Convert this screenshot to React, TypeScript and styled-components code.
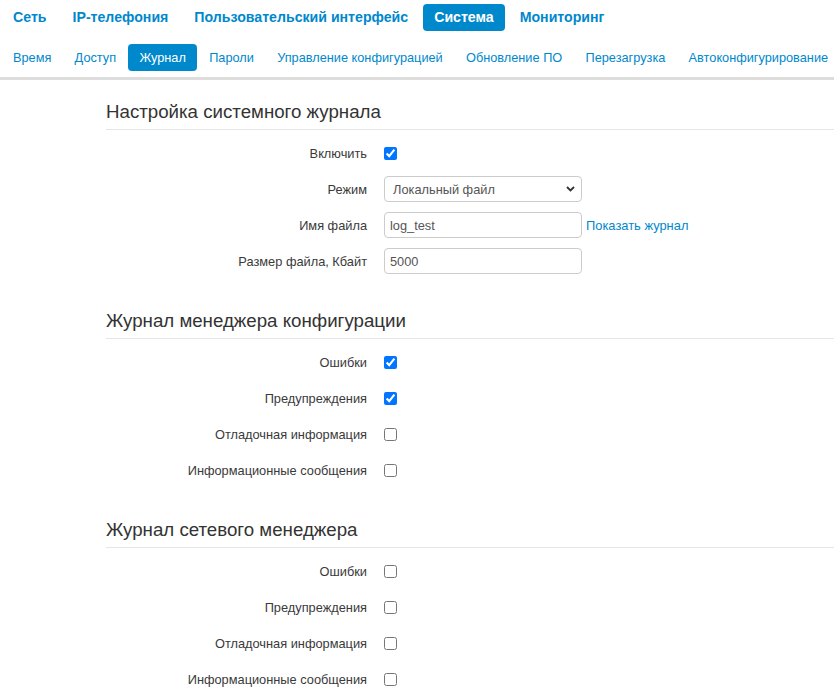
import styled, { createGlobalStyle } from "styled-components"

const GlobalStyle = createGlobalStyle`
  html, body {
    margin: 0;
    padding: 0;
    background: #fff;
    font-family: "Liberation Sans", Arial, sans-serif;
    color: #333;
  }
`

const Page = styled.div`
  width: 100%;
  overflow: hidden;
`

const Header = styled.div`
  border-bottom: 3px solid #ddd;
  padding: 4px 0 6px;
`

const NavRow = styled.ul<{ $gap: number; $top?: number }>`
  display: flex;
  list-style: none;
  margin: ${p => p.$top ?? 0}px 0 0;
  padding: 0 0 0 2px;
  gap: ${p => p.$gap}px;
  white-space: nowrap;
`

const NavItem = styled.li<{ $active?: boolean; $bold?: boolean }>`
  padding: 5px 11px;
  line-height: 17px;
  font-size: ${p => (p.$bold ? 14.15 : 12.75)}px;
  font-weight: ${p => (p.$bold ? "bold" : "normal")};
  border-radius: 4px;
  color: ${p => (p.$active ? "#fff" : "#0088cc")};
  background: ${p => (p.$active ? "#0088cc" : "transparent")};
  cursor: pointer;
`

const Content = styled.div`
  padding: 20px 0 0 106px;
`

const Section = styled.section`
  & + & {
    margin-top: 30px;
  }
`

const Legend = styled.h2`
  margin: 0 0 5px;
  padding: 0 0 5px;
  font-size: 18.7px;
  line-height: 24px;
  font-weight: normal;
  color: #333;
  border-bottom: 1px solid #e5e5e5;
  white-space: nowrap;
`

const Row = styled.div`
  display: grid;
  grid-template-columns: 261px auto;
  column-gap: 17px;
  align-items: center;
  height: 36px;
`

const Label = styled.label`
  text-align: right;
  font-size: 12.8px;
  color: #3a3a3a;
  white-space: nowrap;
`

const Controls = styled.div`
  display: flex;
  align-items: center;
`

const Check = styled.input.attrs({ type: "checkbox" })`
  width: 13px;
  height: 13px;
  margin: 0;
`

const TextInput = styled.input`
  box-sizing: border-box;
  width: 198px;
  height: 26px;
  padding: 3px 5px;
  border: 1px solid #ccc;
  border-radius: 4px;
  font-family: "Liberation Sans", Arial, sans-serif;
  font-size: 12.8px;
  color: #555;
  outline: none;
`

const SelectWrap = styled.div`
  position: relative;
  width: 198px;
`

const Select = styled.select`
  box-sizing: border-box;
  appearance: none;
  width: 198px;
  height: 26px;
  padding: 3px 8px;
  border: 1px solid #ccc;
  border-radius: 4px;
  background: #fff;
  font-family: "Liberation Sans", Arial, sans-serif;
  font-size: 12.8px;
  color: #555;
  outline: none;
`

const Chevron = styled.svg`
  position: absolute;
  right: 7px;
  top: 10px;
  pointer-events: none;
`

const Link = styled.a`
  margin-left: 4px;
  font-size: 12.9px;
  color: #0088cc;
  text-decoration: none;
  white-space: nowrap;
`

const topNav = ["Сеть", "IP-телефония", "Пользовательский интерфейс", "Система", "Мониторинг"]
const subNav = [
  "Время",
  "Доступ",
  "Журнал",
  "Пароли",
  "Управление конфигурацией",
  "Обновление ПО",
  "Перезагрузка",
  "Автоконфигурирование",
]

const levels = ["Ошибки", "Предупреждения", "Отладочная информация", "Информационные сообщения"]

const CheckRow = ({ label, checked }: { label: string; checked?: boolean }) => (
  <Row>
    <Label>{label}</Label>
    <Controls>
      <Check defaultChecked={checked} />
    </Controls>
  </Row>
)

const App = () => {
  return (
    <Page>
      <GlobalStyle />
      <Header>
        <NavRow $gap={4}>
          {topNav.map(item => (
            <NavItem key={item} $bold $active={item === "Система"}>
              {item}
            </NavItem>
          ))}
        </NavRow>
        <NavRow $gap={1.25} $top={13}>
          {subNav.map(item => (
            <NavItem key={item} $active={item === "Журнал"}>
              {item}
            </NavItem>
          ))}
        </NavRow>
      </Header>

      <Content>
        <Section>
          <Legend>Настройка системного журнала</Legend>
          <CheckRow label="Включить" checked />
          <Row>
            <Label>Режим</Label>
            <Controls>
              <SelectWrap>
                <Select defaultValue="file">
                  <option value="file">Локальный файл</option>
                  <option value="syslog">Syslog</option>
                </Select>
                <Chevron width="9" height="6" viewBox="0 0 9 6">
                  <path d="M1 1l3.5 3.5L8 1" fill="none" stroke="#333" strokeWidth="1.8" />
                </Chevron>
              </SelectWrap>
            </Controls>
          </Row>
          <Row>
            <Label>Имя файла</Label>
            <Controls>
              <TextInput defaultValue="log_test" />
              <Link href="#">Показать журнал</Link>
            </Controls>
          </Row>
          <Row>
            <Label>Размер файла, Кбайт</Label>
            <Controls>
              <TextInput defaultValue="5000" />
            </Controls>
          </Row>
        </Section>

        <Section>
          <Legend>Журнал менеджера конфигурации</Legend>
          {levels.map((l, i) => (
            <CheckRow key={l} label={l} checked={i < 2} />
          ))}
        </Section>

        <Section>
          <Legend>Журнал сетевого менеджера</Legend>
          {levels.map(l => (
            <CheckRow key={l} label={l} />
          ))}
        </Section>
      </Content>
    </Page>
  )
}

export default App
